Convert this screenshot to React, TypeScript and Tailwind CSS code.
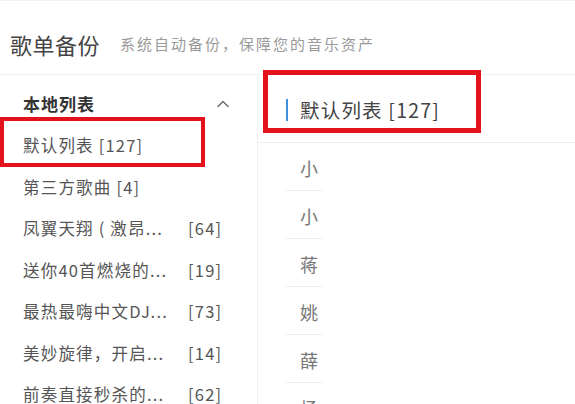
import { ChevronUp } from "lucide-react";

const playlists = [
  { name: "默认列表", count: 127, cut: false },
  { name: "第三方歌曲", count: 4, cut: false },
  { name: "凤翼天翔 ( 激昂...", count: 64, cut: true },
  { name: "送你40首燃烧的...", count: 19, cut: true },
  { name: "最热最嗨中文DJ...", count: 73, cut: true },
  { name: "美妙旋律，开启...", count: 14, cut: true },
  { name: "前奏直接秒杀的...", count: 62, cut: true },
];

const songs = ["小", "小", "蒋", "姚", "薛", "杨"];

export default function App() {
  return (
    <div className="relative w-[575px] h-[404px] overflow-hidden bg-white font-['Noto_Sans_CJK_SC','Noto_Sans',sans-serif] text-[#555]">
      {/* header */}
      <div className="h-[75px] flex items-center pl-[10px] pt-[12px] border-t border-[#f2f2f2] border-b border-b-[#f0f0f0]">
        <span className="text-[22px] text-[#444] leading-none tracking-[0.5px]">歌单备份</span>
        <span className="ml-[20px] text-[15px] text-[#9a9a9a] leading-none tracking-[2px]">
          系统自动备份，保障您的音乐资产
        </span>
      </div>

      <div className="flex h-[329px]">
        {/* sidebar */}
        <div className="w-[258px] shrink-0 border-r border-[#efefef] pt-[8px]">
          <div className="h-[42px] flex items-center justify-between pl-[23px] pr-[24px]">
            <span className="text-[17px] font-bold text-[#333] tracking-[1px]">本地列表</span>
            <ChevronUp className="w-[20px] h-[20px] text-[#666]" strokeWidth={1.6} />
          </div>
          {playlists.map((p) => (
            <div
              key={p.name}
              className="h-[41.5px] flex items-center pl-[23px] text-[16.5px] tracking-[1.2px] whitespace-nowrap"
            >
              {p.cut ? (
                <>
                  <span className="w-[165px]">{p.name}</span>
                  <span>[{p.count}]</span>
                </>
              ) : (
                <span>
                  {p.name} [{p.count}]
                </span>
              )}
            </div>
          ))}
        </div>

        {/* detail */}
        <div className="flex-1">
          <div className="h-[68px] border-b border-[#efefef] flex items-center pl-[28px] pt-[2px]">
            <div className="w-[2px] h-[22px] bg-[#3d8fe0]" />
            <span className="ml-[12px] text-[19.5px] text-[#444] tracking-[1.2px]">默认列表 [127]</span>
          </div>
          <div className="pl-[27px]">
            {songs.map((s, i) => (
              <div
                key={i}
                className="w-[37px] h-[48px] flex items-end pb-[8px] pl-[15px] border-b border-[#eeeeee] text-[18px] text-[#777]"
              >
                {s}
              </div>
            ))}
          </div>
        </div>
      </div>

      {/* annotation boxes */}
      <div className="absolute left-0 top-[117px] w-[205px] h-[50px] border-[4px] border-[#e3121d]" />
      <div className="absolute left-[263px] top-[70px] w-[218px] h-[63px] border-[5px] border-[#e3121d]" />
    </div>
  );
}
